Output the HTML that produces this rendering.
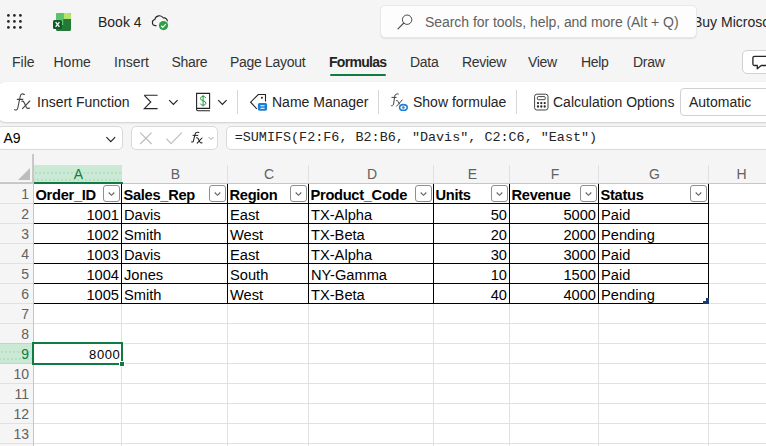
<!DOCTYPE html><html><head><meta charset="utf-8"><style>*{margin:0;padding:0;box-sizing:border-box}
html,body{width:766px;height:446px;overflow:hidden;background:#f5f5f5;font-family:"Liberation Sans",sans-serif;color:#242424}
.a{position:absolute;white-space:nowrap}
.t14{font-size:14px;line-height:16px}
.tab{letter-spacing:-0.3px;color:#333}
.tab0{color:#333}
.colh{height:18px;font-size:14px;line-height:18px;text-align:center}
.rowh{height:19px;font-size:14px;line-height:19px;text-align:right}
.cell{height:19px;font-size:14.67px;line-height:19px;color:#000}
.hdr{font-weight:bold;font-size:14.67px;letter-spacing:-0.3px}
.fbtn{width:17px;height:17px;border:1px solid #8f8f8f;border-radius:3px;background:#fff;padding:0}
.fbtn svg{display:block;margin:0}
.selbg{background-color:#caead6;background-image:radial-gradient(circle,#aed3bb 0.55px,transparent 0.9px),radial-gradient(circle,#aed3bb 0.55px,transparent 0.9px);background-size:4px 4px,4px 4px;background-position:0 5.5px,2px 12.5px;background-repeat:repeat-x}
</style></head><body>
<!-- title bar -->
<svg class="a" style="left:0;top:0" width="40" height="40">
<g fill="#242424"><circle cx="8.4" cy="15.4" r="1.35"/><circle cx="14.4" cy="15.4" r="1.35"/><circle cx="20.4" cy="15.4" r="1.35"/>
<circle cx="8.4" cy="21.4" r="1.35"/><circle cx="14.4" cy="21.4" r="1.35"/><circle cx="20.4" cy="21.4" r="1.35"/>
<circle cx="8.4" cy="27.4" r="1.35"/><circle cx="14.4" cy="27.4" r="1.35"/><circle cx="20.4" cy="27.4" r="1.35"/></g></svg>
<svg class="a" style="left:50px;top:10px" width="24" height="24">
<rect x="6" y="3" width="15" height="18" rx="2" fill="#1d6f32"/>
<path d="M8 3 H13.5 V15 H6 V5 A2 2 0 0 1 8 3 Z" fill="#5ec46c"/>
<path d="M13.5 3 H19 A2 2 0 0 1 21 5 V9 H13.5 Z" fill="#b5e46f"/>
<path d="M13.5 9 H21 V19 A2 2 0 0 1 19 21 H8 A2 2 0 0 1 6 19 V15 H13.5 Z" fill="#237a35"/>
<rect x="3" y="10" width="9" height="9" rx="1.6" fill="#135a2b"/>
<path d="M5.6 12.2 L9.4 16.8 M9.4 12.2 L5.6 16.8" stroke="#fff" stroke-width="1.3"/>
</svg>
<div class="a t14" style="left:98px;top:14px;color:#242424">Book 4</div>
<svg class="a" style="left:148px;top:8px" width="24" height="24">
<path d="M8.4 17.6 H7.1 A3.1 3.1 0 0 1 6.8 11.5 A4.7 4.7 0 0 1 15.4 10 A3.3 3.3 0 0 1 19.4 13.4" fill="none" stroke="#242424" stroke-width="1.1"/>
<circle cx="15.5" cy="17.6" r="5.4" fill="#f5f5f5"/>
<circle cx="15.5" cy="17.6" r="4.6" fill="#2e9e47"/>
<path d="M13.2 17.8 L14.8 19.3 L17.8 16.2" fill="none" stroke="#fff" stroke-width="1.2"/>
</svg>
<div class="a t14" style="left:693px;top:14px;color:#242424">Buy Microsoft 365</div>
<div class="a" style="left:380px;top:5px;width:317px;height:33px;background:#fdfdfd;border-radius:5px;border:1px solid #e8e8e8;box-shadow:0 1px 1px rgba(0,0,0,.08)"></div>
<svg class="a" style="left:395px;top:12px" width="18" height="20">
<circle cx="12.1" cy="7.7" r="4.7" fill="none" stroke="#4a4a4a" stroke-width="1"/>
<path d="M8.8 11 L3 16.8" stroke="#4a4a4a" stroke-width="1.1" stroke-linecap="round"/>
</svg>
<div class="a t14" style="left:425px;top:14px;color:#616161;letter-spacing:-0.05px">Search for tools, help, and more (Alt + Q)</div>

<!-- tabs -->
<div class="a t14 tab0" style="left:12px;top:54px">File</div>
<div class="a t14 tab0" style="left:53.5px;top:54px">Home</div>
<div class="a t14 tab0" style="left:114px;top:54px">Insert</div>
<div class="a t14 tab" style="left:171.5px;top:54px">Share</div>
<div class="a t14 tab" style="left:230px;top:54px">Page Layout</div>
<div class="a t14" style="left:329px;top:54px;font-weight:bold;letter-spacing:-0.7px">Formulas</div>
<div class="a" style="left:330px;top:74px;width:56px;height:2px;background:#107c41;border-radius:1px"></div>
<div class="a t14 tab" style="left:410px;top:54px">Data</div>
<div class="a t14 tab" style="left:462px;top:54px">Review</div>
<div class="a t14 tab" style="left:528px;top:54px">View</div>
<div class="a t14 tab" style="left:581px;top:54px">Help</div>
<div class="a t14 tab" style="left:633px;top:54px">Draw</div>
<div class="a" style="left:742px;top:50px;width:40px;height:24px;background:#fff;border:1px solid #d1d1d1;border-radius:5px"></div>
<svg class="a" style="left:749px;top:52px" width="18" height="20">
<path d="M5.5 4.3 H17 A1.6 1.6 0 0 1 18.6 5.9 V11.9 A1.6 1.6 0 0 1 17 13.5 H12.2 L8.3 16.8 V13.5 H5.5 A1.6 1.6 0 0 1 3.9 11.9 V5.9 A1.6 1.6 0 0 1 5.5 4.3 Z" fill="none" stroke="#242424" stroke-width="1.3" stroke-linejoin="round"/>
</svg>

<!-- ribbon -->
<div class="a" style="left:-2px;top:82px;width:790px;height:40px;background:#fff;border-radius:7px;box-shadow:0 1px 2px rgba(0,0,0,.16),0 0 1px rgba(0,0,0,.06)"></div>
<svg class="a" style="left:12px;top:91px" width="22" height="22">
<path d="M2.6 18.6 C3.6 19.4 5.3 19.2 5.8 17 L8.3 5 C8.8 2.8 10.6 2.4 12.4 3.5" fill="none" stroke="#424242" stroke-width="1.1" stroke-linecap="round"/>
<path d="M5.3 8.4 H10.8" stroke="#424242" stroke-width="1.1" stroke-linecap="round"/>
<path d="M9.8 10.3 C11 9.8 11.8 10.6 12.5 12.2 L14.3 16.2 C14.9 17.4 16 17.8 17.6 17" fill="none" stroke="#424242" stroke-width="1.1" stroke-linecap="round"/>
<path d="M17.8 10 L10.5 17.6" stroke="#424242" stroke-width="1.1" stroke-linecap="round"/>
</svg>
<div class="a t14" style="left:37px;top:94px">Insert Function</div>
<svg class="a" style="left:140px;top:90px" width="100" height="26">
<path d="M4.3 5.3 H17.6 M4.3 5.3 L10.8 12 L4.3 18.6 H17.6" fill="none" stroke="#242424" stroke-width="1.1" stroke-linejoin="miter"/>
<path d="M29.2 10.2 L33.4 14.4 L37.6 10.2" fill="none" stroke="#242424" stroke-width="1.2"/>
<path d="M56.6 3.4 H69.6 V18.4 H56.6 Z" fill="none" stroke="#242424" stroke-width="1.1"/>
<path d="M56.6 18.6 V19.6 C56.6 20.4 57.2 20.8 58 20.8 H70" fill="none" stroke="#242424" stroke-width="1.1"/>
<path d="M65.9 7.9 C65.4 7 64.5 6.5 63.1 6.5 C61.5 6.5 60.5 7.3 60.5 8.6 C60.5 11.4 65.9 10.2 65.9 13.1 C65.9 14.4 64.8 15.1 63.1 15.1 C61.7 15.1 60.7 14.6 60.2 13.6 M63.1 4.9 V16.4" fill="none" stroke="#1f9a3f" stroke-width="1"/>
<path d="M78.2 10.2 L82.4 14.4 L86.6 10.2" fill="none" stroke="#242424" stroke-width="1.2"/>
</svg>
<div class="a" style="left:237px;top:90px;width:1px;height:24px;background:#d6d6d6"></div>
<svg class="a" style="left:248px;top:90px" width="22" height="24">
<path d="M8.9 19 L2.6 12.2 L10.3 4.5 H17.5 V11.4" fill="none" stroke="#242424" stroke-width="1.1" stroke-linejoin="miter"/>
<circle cx="13.9" cy="7.8" r="1.05" fill="#242424"/>
<rect x="9.9" y="13.1" width="9.2" height="7.6" rx="1.6" fill="#1a7fd4"/>
<path d="M12.4 15.7 H16.6 M12.4 18.3 H16.6" stroke="#fff" stroke-width="1.1"/>
</svg>
<div class="a t14" style="left:272px;top:94px">Name Manager</div>
<div class="a" style="left:378px;top:90px;width:1px;height:24px;background:#d6d6d6"></div>
<svg class="a" style="left:388px;top:90px" width="22" height="24">
<path d="M3.1 15.6 C3.8 16.2 5.2 16 5.6 14 L6.7 6.2 C7 4.3 8.5 3.4 10.3 4" fill="none" stroke="#424242" stroke-width="1" stroke-linecap="round"/>
<path d="M3.9 7.4 H8.2" stroke="#424242" stroke-width="1" stroke-linecap="round"/>
<path d="M8.3 10.6 C9.2 10.3 9.8 10.8 10.4 12 L11.6 14.4" fill="none" stroke="#424242" stroke-width="1" stroke-linecap="round"/>
<path d="M14.2 10 L8.6 16.2" stroke="#424242" stroke-width="1" stroke-linecap="round"/>
<ellipse cx="15.4" cy="17.4" rx="5.3" ry="4.3" fill="#fff"/>
<ellipse cx="15.4" cy="17.4" rx="3.8" ry="2.8" fill="none" stroke="#1a7fd4" stroke-width="1.6"/>
<circle cx="15.4" cy="17.4" r="1.25" fill="#1a7fd4"/>
</svg>
<div class="a t14" style="left:413px;top:94px">Show formulae</div>
<div class="a" style="left:516px;top:90px;width:1px;height:24px;background:#d6d6d6"></div>
<svg class="a" style="left:530px;top:90px" width="22" height="24">
<rect x="4.6" y="4.2" width="13.4" height="15.8" rx="2.3" fill="none" stroke="#424242" stroke-width="1"/>
<rect x="7.4" y="6.6" width="7.8" height="3.1" rx="0.8" fill="none" stroke="#424242" stroke-width="1"/>
<g fill="#242424"><circle cx="8" cy="13.1" r="1.15"/><circle cx="11.3" cy="13.1" r="1.15"/><circle cx="14.7" cy="13.1" r="1.15"/>
<circle cx="8" cy="16.5" r="1.15"/><circle cx="11.3" cy="16.5" r="1.15"/><circle cx="14.7" cy="16.5" r="1.15"/></g>
</svg>
<div class="a t14" style="left:553px;top:94px">Calculation Options</div>
<div class="a" style="left:680px;top:88px;width:100px;height:28px;border:1px solid #d1d1d1;border-radius:4px;background:#fff"></div>
<div class="a t14" style="left:689px;top:94px">Automatic</div>

<!-- formula bar -->
<div class="a" style="left:-3px;top:126px;width:126px;height:24px;background:#fff;border:1px solid #d9d9d9;border-radius:5px"></div>
<div class="a" style="left:3.5px;top:129.5px;font-size:14px;line-height:17px;color:#000">A9</div>
<svg class="a" style="left:102px;top:130px" width="18" height="16"><path d="M4.4 7.2 L8.8 11.6 L13.2 7.2" fill="none" stroke="#242424" stroke-width="1.15"/></svg>
<div class="a" style="left:131px;top:126px;width:87px;height:24px;background:#fff;border:1px solid #d9d9d9;border-radius:5px"></div>
<svg class="a" style="left:132px;top:126px" width="86" height="24">
<path d="M8.2 6.6 L19.6 18 M19.6 6.6 L8.2 18" stroke="#bdbdbd" stroke-width="1.2"/>
<path d="M34.4 12.6 L39 17.6 L49.8 6.6" fill="none" stroke="#bdbdbd" stroke-width="1.2"/>
<path d="M59.6 15.8 C60.4 16.4 61.1 16 61.4 14.8 L63.2 8 C63.7 6.5 65 6 66.8 6.6" fill="none" stroke="#242424" stroke-width="1.05" stroke-linecap="round"/>
<path d="M61 9.4 H65.8" stroke="#242424" stroke-width="1" stroke-linecap="round"/>
<path d="M64.6 11.8 C65.4 11.6 65.9 12 66.4 13 L67.6 15.6 C68 16.6 69 17 70.1 16.8" fill="none" stroke="#242424" stroke-width="1.1" stroke-linecap="round"/>
<path d="M70 12 L65.2 17.2" stroke="#242424" stroke-width="1.1" stroke-linecap="round"/>
<path d="M76.6 11 L79.1 13.5 L81.6 11" fill="none" stroke="#a8a8a8" stroke-width="1"/>
</svg>
<div class="a" style="left:226px;top:126px;width:560px;height:24px;background:#fff;border:1px solid #d9d9d9;border-radius:5px"></div>
<div class="a" style="left:234.7px;top:129px;font-family:'Liberation Mono',monospace;font-size:13.43px;line-height:17px;color:#242424">=SUMIFS(F2:F6, B2:B6, "Davis", C2:C6, "East")</div>

<div class="a" style="left:33px;top:183px;width:733px;height:263px;background:#fff"></div>
<div class="a" style="left:0;top:203px;width:766px;height:1px;background:#e1e1e1"></div>
<div class="a" style="left:0;top:223px;width:766px;height:1px;background:#e1e1e1"></div>
<div class="a" style="left:0;top:243px;width:766px;height:1px;background:#e1e1e1"></div>
<div class="a" style="left:0;top:263px;width:766px;height:1px;background:#e1e1e1"></div>
<div class="a" style="left:0;top:283px;width:766px;height:1px;background:#e1e1e1"></div>
<div class="a" style="left:0;top:303px;width:766px;height:1px;background:#e1e1e1"></div>
<div class="a" style="left:0;top:323px;width:766px;height:1px;background:#e1e1e1"></div>
<div class="a" style="left:0;top:343px;width:766px;height:1px;background:#e1e1e1"></div>
<div class="a" style="left:0;top:363px;width:766px;height:1px;background:#e1e1e1"></div>
<div class="a" style="left:0;top:383px;width:766px;height:1px;background:#e1e1e1"></div>
<div class="a" style="left:0;top:403px;width:766px;height:1px;background:#e1e1e1"></div>
<div class="a" style="left:0;top:423px;width:766px;height:1px;background:#e1e1e1"></div>
<div class="a" style="left:0;top:443px;width:766px;height:1px;background:#e1e1e1"></div>
<div class="a" style="left:121px;top:165px;width:1px;height:281px;background:#e1e1e1"></div>
<div class="a" style="left:227px;top:165px;width:1px;height:281px;background:#e1e1e1"></div>
<div class="a" style="left:308px;top:165px;width:1px;height:281px;background:#e1e1e1"></div>
<div class="a" style="left:433px;top:165px;width:1px;height:281px;background:#e1e1e1"></div>
<div class="a" style="left:509px;top:165px;width:1px;height:281px;background:#e1e1e1"></div>
<div class="a" style="left:598px;top:165px;width:1px;height:281px;background:#e1e1e1"></div>
<div class="a" style="left:708px;top:165px;width:1px;height:281px;background:#e1e1e1"></div>
<div class="a" style="left:0;top:183px;width:766px;height:1px;background:#c6c6c6"></div>
<div class="a" style="left:33px;top:154px;width:1px;height:292px;background:#c6c6c6"></div>
<div class="a" style="left:32px;top:154px;width:1px;height:30px;background:#cacaca"></div>
<div class="a" style="left:0;top:182px;width:33px;height:1px;background:#cacaca"></div>
<div class="a selbg" style="left:34px;top:165px;width:88px;height:17px"></div>
<div class="a" style="left:34px;top:182px;width:89px;height:2px;background:#107c41"></div>
<div class="a selbg" style="left:0;top:343px;width:33px;height:21px;border-top:1px solid #b4dcc2;border-bottom:1px solid #b4dcc2"></div>
<div class="a colh" style="left:35px;top:165px;width:87px;color:#107c41">A</div>
<div class="a colh" style="left:123px;top:165px;width:105px;color:#616161">B</div>
<div class="a colh" style="left:229px;top:165px;width:80px;color:#616161">C</div>
<div class="a colh" style="left:310px;top:165px;width:124px;color:#616161">D</div>
<div class="a colh" style="left:435px;top:165px;width:75px;color:#616161">E</div>
<div class="a colh" style="left:511px;top:165px;width:88px;color:#616161">F</div>
<div class="a colh" style="left:600px;top:165px;width:109px;color:#616161">G</div>
<div class="a colh" style="left:710px;top:165px;width:63px;color:#616161">H</div>
<div class="a rowh" style="left:0;top:185px;width:29px;color:#616161">1</div>
<div class="a rowh" style="left:0;top:205px;width:29px;color:#616161">2</div>
<div class="a rowh" style="left:0;top:225px;width:29px;color:#616161">3</div>
<div class="a rowh" style="left:0;top:245px;width:29px;color:#616161">4</div>
<div class="a rowh" style="left:0;top:265px;width:29px;color:#616161">5</div>
<div class="a rowh" style="left:0;top:285px;width:29px;color:#616161">6</div>
<div class="a rowh" style="left:0;top:305px;width:29px;color:#616161">7</div>
<div class="a rowh" style="left:0;top:325px;width:29px;color:#616161">8</div>
<div class="a rowh" style="left:0;top:345px;width:29px;color:#107c41">9</div>
<div class="a rowh" style="left:0;top:365px;width:29px;color:#616161">10</div>
<div class="a rowh" style="left:0;top:385px;width:29px;color:#616161">11</div>
<div class="a rowh" style="left:0;top:405px;width:29px;color:#616161">12</div>
<div class="a rowh" style="left:0;top:425px;width:29px;color:#616161">13</div>
<svg class="a" style="left:18px;top:168px" width="13" height="12"><path d="M12 0 L12 12 L0 12 Z" fill="#bdbdbd"/></svg>
<div class="a" style="left:34px;top:203px;width:675px;height:1px;background:#000"></div>
<div class="a" style="left:34px;top:223px;width:675px;height:1px;background:#000"></div>
<div class="a" style="left:34px;top:243px;width:675px;height:1px;background:#000"></div>
<div class="a" style="left:34px;top:263px;width:675px;height:1px;background:#000"></div>
<div class="a" style="left:34px;top:283px;width:675px;height:1px;background:#000"></div>
<div class="a" style="left:34px;top:303px;width:675px;height:1px;background:#000"></div>
<div class="a" style="left:121px;top:184px;width:1px;height:120px;background:#000"></div>
<div class="a" style="left:227px;top:184px;width:1px;height:120px;background:#000"></div>
<div class="a" style="left:308px;top:184px;width:1px;height:120px;background:#000"></div>
<div class="a" style="left:433px;top:184px;width:1px;height:120px;background:#000"></div>
<div class="a" style="left:509px;top:184px;width:1px;height:120px;background:#000"></div>
<div class="a" style="left:598px;top:184px;width:1px;height:120px;background:#000"></div>
<div class="a" style="left:708px;top:184px;width:1px;height:120px;background:#000"></div>
<div class="a cell hdr" style="left:35.5px;top:185.5px">Order_ID</div>
<div class="a fbtn" style="left:103px;top:185px"><svg width="15" height="15"><path d="M4.7 6.5 L7.5 9.3 L10.3 6.5" fill="none" stroke="#616161" stroke-width="1.1"/></svg></div>
<div class="a cell hdr" style="left:123.5px;top:185.5px">Sales_Rep</div>
<div class="a fbtn" style="left:209px;top:185px"><svg width="15" height="15"><path d="M4.7 6.5 L7.5 9.3 L10.3 6.5" fill="none" stroke="#616161" stroke-width="1.1"/></svg></div>
<div class="a cell hdr" style="left:229.5px;top:185.5px">Region</div>
<div class="a fbtn" style="left:290px;top:185px"><svg width="15" height="15"><path d="M4.7 6.5 L7.5 9.3 L10.3 6.5" fill="none" stroke="#616161" stroke-width="1.1"/></svg></div>
<div class="a cell hdr" style="left:310.5px;top:185.5px">Product_Code</div>
<div class="a fbtn" style="left:415px;top:185px"><svg width="15" height="15"><path d="M4.7 6.5 L7.5 9.3 L10.3 6.5" fill="none" stroke="#616161" stroke-width="1.1"/></svg></div>
<div class="a cell hdr" style="left:435.5px;top:185.5px">Units</div>
<div class="a fbtn" style="left:491px;top:185px"><svg width="15" height="15"><path d="M4.7 6.5 L7.5 9.3 L10.3 6.5" fill="none" stroke="#616161" stroke-width="1.1"/></svg></div>
<div class="a cell hdr" style="left:511.5px;top:185.5px">Revenue</div>
<div class="a fbtn" style="left:580px;top:185px"><svg width="15" height="15"><path d="M4.7 6.5 L7.5 9.3 L10.3 6.5" fill="none" stroke="#616161" stroke-width="1.1"/></svg></div>
<div class="a cell hdr" style="left:600.5px;top:185.5px">Status</div>
<div class="a fbtn" style="left:690px;top:185px"><svg width="15" height="15"><path d="M4.7 6.5 L7.5 9.3 L10.3 6.5" fill="none" stroke="#616161" stroke-width="1.1"/></svg></div>
<div class="a cell" style="left:34px;width:85px;top:206px;text-align:right">1001</div>
<div class="a cell" style="left:124px;top:206px">Davis</div>
<div class="a cell" style="left:230px;top:206px">East</div>
<div class="a cell" style="left:311px;top:206px">TX-Alpha</div>
<div class="a cell" style="left:434px;width:73px;top:206px;text-align:right">50</div>
<div class="a cell" style="left:510px;width:86px;top:206px;text-align:right">5000</div>
<div class="a cell" style="left:601px;top:206px">Paid</div>
<div class="a cell" style="left:34px;width:85px;top:226px;text-align:right">1002</div>
<div class="a cell" style="left:124px;top:226px">Smith</div>
<div class="a cell" style="left:230px;top:226px">West</div>
<div class="a cell" style="left:311px;top:226px">TX-Beta</div>
<div class="a cell" style="left:434px;width:73px;top:226px;text-align:right">20</div>
<div class="a cell" style="left:510px;width:86px;top:226px;text-align:right">2000</div>
<div class="a cell" style="left:601px;top:226px">Pending</div>
<div class="a cell" style="left:34px;width:85px;top:246px;text-align:right">1003</div>
<div class="a cell" style="left:124px;top:246px">Davis</div>
<div class="a cell" style="left:230px;top:246px">East</div>
<div class="a cell" style="left:311px;top:246px">TX-Alpha</div>
<div class="a cell" style="left:434px;width:73px;top:246px;text-align:right">30</div>
<div class="a cell" style="left:510px;width:86px;top:246px;text-align:right">3000</div>
<div class="a cell" style="left:601px;top:246px">Paid</div>
<div class="a cell" style="left:34px;width:85px;top:266px;text-align:right">1004</div>
<div class="a cell" style="left:124px;top:266px">Jones</div>
<div class="a cell" style="left:230px;top:266px">South</div>
<div class="a cell" style="left:311px;top:266px">NY-Gamma</div>
<div class="a cell" style="left:434px;width:73px;top:266px;text-align:right">10</div>
<div class="a cell" style="left:510px;width:86px;top:266px;text-align:right">1500</div>
<div class="a cell" style="left:601px;top:266px">Paid</div>
<div class="a cell" style="left:34px;width:85px;top:286px;text-align:right">1005</div>
<div class="a cell" style="left:124px;top:286px">Smith</div>
<div class="a cell" style="left:230px;top:286px">West</div>
<div class="a cell" style="left:311px;top:286px">TX-Beta</div>
<div class="a cell" style="left:434px;width:73px;top:286px;text-align:right">40</div>
<div class="a cell" style="left:510px;width:86px;top:286px;text-align:right">4000</div>
<div class="a cell" style="left:601px;top:286px">Pending</div>
<div class="a cell" style="left:34px;width:86.4px;top:344.5px;text-align:right;font-size:13px;letter-spacing:0.6px">8000</div>
<div class="a" style="left:32px;top:342px;width:91px;height:23px;border:2px solid #107c41"></div>
<div class="a" style="left:119px;top:361px;width:6px;height:6px;background:#107c41;border:1px solid #fff"></div>
<div class="a" style="left:706px;top:298px;width:3px;height:6px;background:#1b3a6e"></div>
<div class="a" style="left:703px;top:301px;width:6px;height:3px;background:#1b3a6e"></div>
</body></html>
